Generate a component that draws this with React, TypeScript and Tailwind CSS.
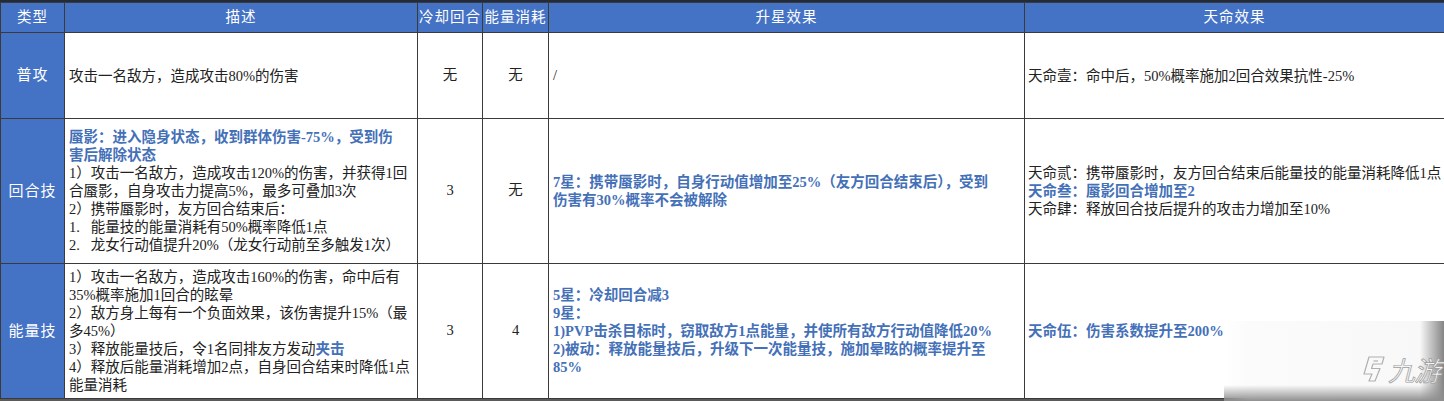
import React from 'react'

type Seg = { t: string; blue?: boolean }
type Line = Seg[] | string

const cellFont = { fontFamily: '"Liberation Serif", "Noto Sans CJK SC", serif' }

function Lines({ lines, blue }: { lines: Line[]; blue?: boolean }) {
  return (
    <div className="flex flex-col">
      {lines.map((line, i) => (
        <div key={i} className="whitespace-pre leading-[18px]">
          {typeof line === 'string' ? (
            <span className={blue ? 'font-semibold text-[#4470b8]' : ''}>{line}</span>
          ) : (
            line.map((s, j) => (
              <span key={j} className={s.blue ? 'font-semibold text-[#4470b8]' : ''}>
                {s.t}
              </span>
            ))
          )}
        </div>
      ))}
    </div>
  )
}

const headers = ['类型', '描述', '冷却回合', '能量消耗', '升星效果', '天命效果']

function TypeCell({ label }: { label: string }) {
  return (
    <td className="border border-[#3a3a3a] bg-[#4472c4] text-center text-[15px] tracking-[1px] text-white">
      {label}
    </td>
  )
}

export default function App() {
  return (
    <div className="relative h-[401px] w-[1444px] overflow-hidden bg-[#5a5a5a]" style={cellFont}>
      <div className="h-[2px] bg-[#232a3a]" />
      <table className="w-[1444px] table-fixed border-collapse bg-white text-[14.5px] text-[#222]">
        <colgroup>
          <col className="w-[64px]" />
          <col className="w-[353px]" />
          <col className="w-[65px]" />
          <col className="w-[66px]" />
          <col className="w-[476px]" />
          <col className="w-[420px]" />
        </colgroup>
        <thead>
          <tr className="h-[30px]">
            {headers.map((h) => (
              <th
                key={h}
                className="border border-[#3a3a3a] bg-[#4472c4] text-center text-[14.5px] font-normal tracking-[1px] text-white"
              >
                {h}
              </th>
            ))}
          </tr>
        </thead>
        <tbody>
          <tr className="h-[86px]">
            <TypeCell label="普攻" />
            <td className="border border-[#3a3a3a] pl-1 align-middle">
              <Lines lines={['攻击一名敌方，造成攻击80%的伤害']} />
            </td>
            <td className="border border-[#3a3a3a] text-center">无</td>
            <td className="border border-[#3a3a3a] text-center">无</td>
            <td className="border border-[#3a3a3a] pl-1">/</td>
            <td className="border border-[#3a3a3a] pl-[3px]">
              <Lines lines={['天命壹：命中后，50%概率施加2回合效果抗性-25%']} />
            </td>
          </tr>
          <tr className="h-[145px]">
            <TypeCell label="回合技" />
            <td className="border border-[#3a3a3a] pl-1 align-middle">
              <Lines
                lines={[
                  [{ t: '蜃影：进入隐身状态，收到群体伤害-75%，受到伤', blue: true }],
                  [{ t: '害后解除状态', blue: true }],
                  '1）攻击一名敌方，造成攻击120%的伤害，并获得1回',
                  '合蜃影，自身攻击力提高5%，最多可叠加3次',
                  '2）携带蜃影时，友方回合结束后：',
                  '1.   能量技的能量消耗有50%概率降低1点',
                  '2.   龙女行动值提升20%（龙女行动前至多触发1次）',
                ]}
              />
            </td>
            <td className="border border-[#3a3a3a] text-center">3</td>
            <td className="border border-[#3a3a3a] text-center">无</td>
            <td className="border border-[#3a3a3a] pl-1">
              <Lines
                blue
                lines={['7星：携带蜃影时，自身行动值增加至25%（友方回合结束后），受到', '伤害有30%概率不会被解除']}
              />
            </td>
            <td className="border border-[#3a3a3a] pl-[3px]">
              <Lines
                lines={[
                  '天命贰：携带蜃影时，友方回合结束后能量技的能量消耗降低1点',
                  [{ t: '天命叁：蜃影回合增加至2', blue: true }],
                  '天命肆：释放回合技后提升的攻击力增加至10%',
                ]}
              />
            </td>
          </tr>
          <tr className="h-[135px]">
            <TypeCell label="能量技" />
            <td className="border border-[#3a3a3a] pl-1 align-middle">
              <Lines
                lines={[
                  '1）攻击一名敌方，造成攻击160%的伤害，命中后有',
                  '35%概率施加1回合的眩晕',
                  '2）敌方身上每有一个负面效果，该伤害提升15%（最',
                  '多45%）',
                  [{ t: '3）释放能量技后，令1名同排友方发动' }, { t: '夹击', blue: true }],
                  '4）释放后能量消耗增加2点，自身回合结束时降低1点',
                  '能量消耗',
                ]}
              />
            </td>
            <td className="border border-[#3a3a3a] text-center">3</td>
            <td className="border border-[#3a3a3a] text-center">4</td>
            <td className="border border-[#3a3a3a] pl-1">
              <Lines
                blue
                lines={[
                  '5星：冷却回合减3',
                  '9星：',
                  '1)PVP击杀目标时，窃取敌方1点能量，并使所有敌方行动值降低20%',
                  '2)被动：释放能量技后，升级下一次能量技，施加晕眩的概率提升至',
                  '85%',
                ]}
              />
            </td>
            <td className="border border-[#3a3a3a] pl-[3px]">
              <Lines blue lines={['天命伍：伤害系数提升至200%']} />
            </td>
          </tr>
        </tbody>
      </table>

      {/* watermark */}
      <div className="absolute left-[1224px] top-[321px] z-10 h-[80px] w-[220px] bg-[linear-gradient(to_right,#ffffff00_0px,#fbfbfb_24px,#f8f8f8_196px,#858585_220px)]">
        <div className="absolute inset-x-0 bottom-0 h-[16px] bg-[linear-gradient(to_bottom,#fbfbfb00,#8f8f8f)]" />
        <div className="absolute right-[4px] top-[34px] flex items-center gap-[3px]">
          <svg width="24" height="28" viewBox="0 0 24 28" fill="none" stroke="#b0b0b0" strokeWidth="1.2" strokeLinejoin="round">
            <path d="M8 2 H23 L21 9 H12 L10.5 13.5 H19 L14 26 H8 L11 19 H3 L8 2 Z" />
            <path d="M12.5 6 H17" />
          </svg>
          <span
            className="text-[27px] font-normal italic leading-none tracking-[-1px] text-[#f4f4f4] [-webkit-text-stroke:0.7px_#9c9c9c]"
            style={{ fontFamily: '"Noto Sans CJK SC", sans-serif' }}
          >
            九游
          </span>
        </div>
      </div>
    </div>
  )
}
